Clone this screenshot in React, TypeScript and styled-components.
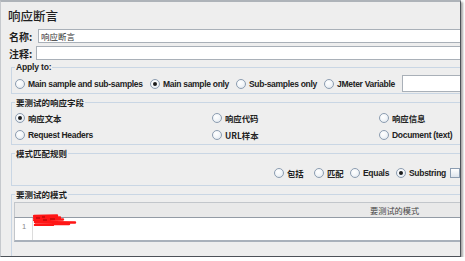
import React from 'react';
import styled, { createGlobalStyle } from 'styled-components';

const Global = createGlobalStyle`
  html, body { margin: 0; padding: 0; background: #ffffff; }
  body { font-family: "Liberation Sans", "Noto Sans CJK SC", sans-serif; color: #2b2b2b; }
`;

const CJK = `"Noto Sans CJK SC", "Liberation Sans", sans-serif`;

const Frame = styled.div`
  width: 461px;
  height: 257px;
  box-sizing: border-box;
  background: #eeeeee;
  border-top: 2px solid #aeb3b9;
  border-left: 1px solid #c6c9cd;
  border-right: 1px solid #4d5258;
  border-bottom: 1px solid #4d5258;
  box-shadow: 2px 2px 2px rgba(0, 0, 0, 0.35);
  overflow: hidden;
`;

const Panel = styled.div`
  width: 620px;
  display: flex;
  flex-direction: column;
`;

const Title = styled.div`
  height: 27px;
  display: flex;
  align-items: center;
  padding-left: 7px;
  font-family: ${CJK};
  font-size: 12.5px;
  font-weight: 500;
  color: #1e1e1e;
`;

const FormRow = styled.div<{ $mt?: number }>`
  display: flex;
  align-items: center;
  height: 14px;
  margin-top: ${(p) => p.$mt ?? 0}px;
  padding-left: 8px;
`;

const FormLabel = styled.span<{ $w: number }>`
  width: ${(p) => p.$w}px;
  flex: none;
  font-family: ${CJK};
  font-size: 10px;
  font-weight: 700;
  color: #1e1e1e;
`;

const TextBox = styled.div`
  flex: 1;
  height: 14px;
  box-sizing: border-box;
  background: #ffffff;
  border: 1px solid #a9b0b8;
  display: flex;
  align-items: center;
  padding-left: 2px;
  font-family: ${CJK};
  font-size: 8.5px;
  color: #333;
`;

const Group = styled.fieldset<{ $mt: number; $pt: number; $pb: number }>`
  margin: ${(p) => p.$mt}px 0 0 10px;
  padding: ${(p) => p.$pt}px 0 ${(p) => p.$pb}px 3px;
  border: 1px solid #c9d6e4;
  min-width: 0;
`;

const Legend = styled.legend`
  padding: 0 1px;
  line-height: 10px;
  font-family: ${CJK};
  font-size: 8.5px;
  font-weight: 700;
  color: #1e1e1e;
`;

const LatinLegend = styled(Legend)`
  font-family: "Liberation Sans", sans-serif;
  font-size: 8.6px;
  letter-spacing: -0.2px;
`;

const OptionRow = styled.div<{ $pl?: number }>`
  display: flex;
  align-items: center;
  height: 17px;
  padding-left: ${(p) => p.$pl ?? 0}px;
`;

const OptionGrid = styled.div`
  display: grid;
  grid-template-columns: 197px 167px 200px;
  grid-auto-rows: 17px;
  align-items: center;
`;

const Option = styled.div<{ $w?: number }>`
  display: flex;
  align-items: center;
  width: ${(p) => (p.$w ? `${p.$w}px` : 'auto')};
  flex: none;
`;

const RadioDot = styled.span<{ $on?: boolean }>`
  width: 10px;
  height: 10px;
  box-sizing: border-box;
  border-radius: 50%;
  border: 1px solid #8c9db1;
  background: radial-gradient(circle at 40% 35%, #ffffff 0%, #f3f6f9 45%, #d9e1ea 100%);
  margin-right: 3px;
  flex: none;
  display: flex;
  align-items: center;
  justify-content: center;
  &::after {
    content: '';
    display: ${(p) => (p.$on ? 'block' : 'none')};
    width: 4px;
    height: 4px;
    border-radius: 50%;
    background: #1b1b1b;
  }
`;

const CheckBox = styled.span`
  width: 10px;
  height: 10px;
  box-sizing: border-box;
  border: 1px solid #8c9db1;
  background: linear-gradient(#ffffff, #dde4ec);
  flex: none;
`;

const Text = styled.span<{ $cjk?: boolean }>`
  font-family: ${(p) => (p.$cjk ? CJK : `"Liberation Sans", sans-serif`)};
  font-size: ${(p) => (p.$cjk ? '8.4px' : '8.5px')};
  letter-spacing: ${(p) => (p.$cjk ? '0' : '-0.3px')};
  font-weight: 700;
  color: #222;
  white-space: nowrap;
`;

const VarBox = styled.div`
  width: 120px;
  height: 17px;
  box-sizing: border-box;
  background: #fff;
  border: 1px solid #a9b0b8;
  flex: none;
`;

const Table = styled.div`
  margin-left: -1px;
  display: flex;
  flex-direction: column;
`;

const TableHead = styled.div`
  height: 14px;
  box-sizing: content-box;
  border-top: 1px solid #c2c6cb;
  border-left: 1px solid #c2c6cb;
  border-bottom: 1px solid #939ba5;
  background: #e9e9e9;
  display: flex;
  align-items: center;
  padding-left: 355px;
  font-family: ${CJK};
  font-size: 8.2px;
  color: #444;
`;

const TableBody = styled.div`
  height: 22px;
  background: #ffffff;
  border-left: 1px solid #c2c6cb;
  border-bottom: 2px solid #a9b1bb;
  display: flex;
`;

const Gutter = styled.div`
  width: 18px;
  flex: none;
  border-right: 1px solid #dcdcdc;
  font-family: "Liberation Sans", sans-serif;
  font-size: 7.5px;
  color: #888;
  padding-top: 4px;
  box-sizing: border-box;
  padding-left: 7px;
`;

const Cell = styled.div`
  flex: 1;
`;

const Scribble = styled.svg`
  display: block;
  margin-top: -4px;
`;

export default function App() {
  return (
    <>
      <Global />
      <Frame>
        <Panel>
          <Title>响应断言</Title>
          <FormRow>
            <FormLabel $w={29}>名称:</FormLabel>
            <TextBox>响应断言</TextBox>
          </FormRow>
          <FormRow $mt={3}>
            <FormLabel $w={27}>注释:</FormLabel>
            <TextBox />
          </FormRow>

          <Group $mt={2} $pt={3} $pb={1}>
            <LatinLegend>Apply to:</LatinLegend>
            <OptionRow>
              <Option $w={135}><RadioDot /><Text>Main sample and sub-samples</Text></Option>
              <Option $w={86}><RadioDot $on /><Text>Main sample only</Text></Option>
              <Option $w={88}><RadioDot /><Text>Sub-samples only</Text></Option>
              <Option $w={78}><RadioDot /><Text>JMeter Variable</Text></Option>
              <VarBox />
            </OptionRow>
          </Group>

          <Group $mt={3} $pt={2} $pb={1}>
            <Legend>要测试的响应字段</Legend>
            <OptionGrid>
              <Option><RadioDot $on /><Text $cjk>响应文本</Text></Option>
              <Option><RadioDot /><Text $cjk>响应代码</Text></Option>
              <Option><RadioDot /><Text $cjk>响应信息</Text></Option>
              <Option><RadioDot /><Text>Request Headers</Text></Option>
              <Option><RadioDot /><Text $cjk>URL样本</Text></Option>
              <Option><RadioDot /><Text>Document (text)</Text></Option>
            </OptionGrid>
          </Group>

          <Group $mt={3} $pt={6} $pb={4}>
            <Legend>模式匹配规则</Legend>
            <OptionRow $pl={259}>
              <Option $w={40}><RadioDot /><Text $cjk>包括</Text></Option>
              <Option $w={36}><RadioDot /><Text $cjk>匹配</Text></Option>
              <Option $w={46}><RadioDot /><Text>Equals</Text></Option>
              <Option $w={54}><RadioDot $on /><Text>Substring</Text></Option>
              <Option><CheckBox /></Option>
            </OptionRow>
          </Group>

          <Group $mt={3} $pt={3} $pb={30}>
            <Legend>要测试的模式</Legend>
            <Table>
              <TableHead>要测试的模式</TableHead>
              <TableBody>
                <Gutter>1</Gutter>
                <Cell>
                  <Scribble width="44" height="12" viewBox="0 0 44 12">
                    <path d="M1 2 L24 1.5 M1 4 L27 3.5 M1 6 L30 5.5 M2 8 L42 8.5 M3 10 L36 10 M2 11 L20 11" stroke="#ff1616" strokeWidth="2.4" fill="none" strokeLinecap="round" />
                    <path d="M3 4 L7 4 M10 6 L14 6 M17 5 L22 5 M9 3 L12 3" stroke="#8a0000" strokeWidth="0.8" fill="none" />
                  </Scribble>
                </Cell>
              </TableBody>
            </Table>
          </Group>
        </Panel>
      </Frame>
    </>
  );
}
